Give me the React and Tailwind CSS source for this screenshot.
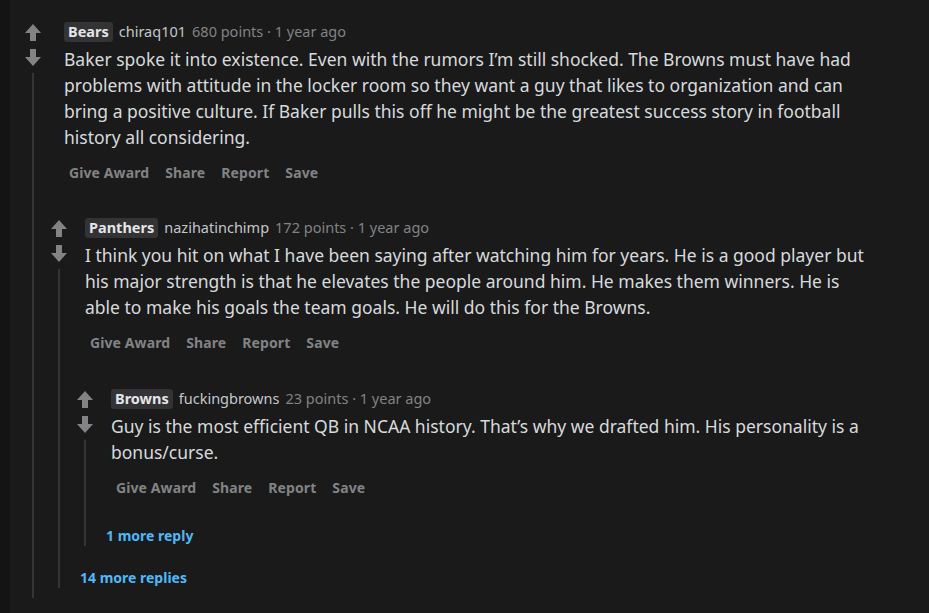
import React from 'react';

const Arrow = ({ down }) => (
    <svg width="16" height="17" viewBox="0 0 16 17" className={down ? 'rotate-180' : ''}>
        <path d="M8 0L16 9H11V17H5V9H0Z" fill="#818384" />
    </svg>
);

const Header = ({ badge, user, points }) => (
    <div className="flex h-[20px] items-center text-[14.5px]">
        <span className="flex h-[20px] items-center rounded-[3px] bg-[#333335] px-[4px] text-[14.5px] font-bold text-[#e4e6e8]">{badge}</span>
        <span className="ml-[6px] text-[#c4c7c9]">{user}</span>
        <span className="ml-[6px] text-[#818384]">{points} points · 1 year ago</span>
    </div>
);

const Actions = () => (
    <div className="mt-[8px] flex h-[28px] items-center gap-[6px] text-[14px] font-bold tracking-[0.1px] text-[#818384]">
        {['Give Award', 'Share', 'Report', 'Save'].map((a) => (
            <span key={a} className="px-[5px]">{a}</span>
        ))}
    </div>
);

const Body = ({ lines }) => (
    <div className="mt-[4px] text-[17.5px] leading-[26px] text-[#d7dadc]">
        {lines.map((l, i) => (
            <div key={i} className="whitespace-nowrap">{l}</div>
        ))}
    </div>
);

// one comment: arrow column with thread line, then content and replies
const Comment = ({ badge, user, points, lines, pad, children, className = '' }) => (
    <div className={`flex ${className}`}>
        <div className="flex w-[26px] shrink-0 flex-col items-center pt-[2px]">
            <Arrow />
            <div className="mt-[8px]"><Arrow down /></div>
            <div className="mt-[7px] w-[2px] flex-1 bg-[#343536]" />
        </div>
        <div className="min-w-0 flex-1">
            <div className={pad}>
                <Header badge={badge} user={user} points={points} />
                <Body lines={lines} />
                <Actions />
            </div>
            {children}
        </div>
    </div>
);

export default function App() {
    return (
        <div className="flex h-[613px] overflow-hidden bg-[#1a1a1b]" style={{ fontFamily: '"Noto Sans", sans-serif' }}>
            <div className="w-[10px] shrink-0 bg-[#141415]" />
            <div className="flex-1 pl-[10px] pt-[22px]">
                <Comment
                    badge="Bears"
                    user="chiraq101"
                    points="680"
                    pad="pl-[18px]"
                    className="pb-[60px]"
                    lines={[
                        'Baker spoke it into existence. Even with the rumors I’m still shocked. The Browns must have had',
                        'problems with attitude in the locker room so they want a guy that likes to organization and can',
                        'bring a positive culture. If Baker pulls this off he might be the greatest success story in football',
                        'history all considering.',
                    ]}
                >
                    <Comment
                        badge="Panthers"
                        user="nazihatinchimp"
                        points="172"
                        pad="pl-[13px]"
                        className="mt-[32px] pb-[10px]"
                        lines={[
                            'I think you hit on what I have been saying after watching him for years. He is a good player but',
                            'his major strength is that he elevates the people around him. He makes them winners. He is',
                            'able to make his goals the team goals. He will do this for the Browns.',
                        ]}
                    >
                        <Comment
                            badge="Browns"
                            user="fuckingbrowns"
                            points="23"
                            pad="pl-[13px]"
                            className="mt-[33px] pb-[10px]"
                            lines={[
                                'Guy is the most efficient QB in NCAA history. That’s why we drafted him. His personality is a',
                                'bonus/curse.',
                            ]}
                        >
                            <div className="mt-[25px] pl-[8px] text-[14px] font-bold leading-[20px] text-[#4fb8f6]">1 more reply</div>
                        </Comment>
                        <div className="mt-[12px] pl-[8px] text-[14px] font-bold leading-[20px] text-[#4fb8f6]">14 more replies</div>
                    </Comment>
                </Comment>
            </div>
        </div>
    );
}
